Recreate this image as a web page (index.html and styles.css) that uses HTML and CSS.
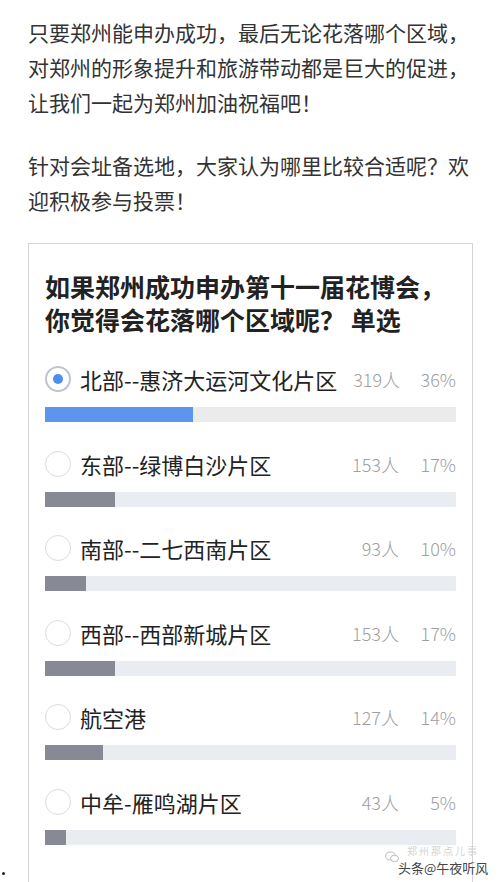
FILE: index.html
```html
<!DOCTYPE html>
<html lang="zh-CN">
<head>
<meta charset="utf-8">
<title>投票</title>
<link rel="stylesheet" href="styles.css">
</head>
<body>
<div class="page">
  <p class="para">只要郑州能申办成功，最后无论花落哪个区域，对郑州的形象提升和旅游带动都是巨大的促进，让我们一起为郑州加油祝福吧！</p>
  <p class="para para-2">针对会址备选地，大家认为哪里比较合适呢？欢迎积极参与投票！</p>

  <div class="vote-row">
    <div class="marker"><span class="dot"></span></div>
    <div class="card">
      <h2 class="title">如果郑州成功申办第十一届花博会，<br>你觉得会花落哪个区域呢？ 单选</h2>
      <ul class="options">
        <li class="option">
          <div class="opt-line">
            <span class="radio radio-on"></span>
            <span class="label">北部--惠济大运河文化片区</span>
            <span class="count">319人</span>
            <span class="pct">36%</span>
          </div>
          <div class="track track-on"><div class="fill fill-on" style="width:36%"></div></div>
        </li>
        <li class="option">
          <div class="opt-line">
            <span class="radio"></span>
            <span class="label">东部--绿博白沙片区</span>
            <span class="count">153人</span>
            <span class="pct">17%</span>
          </div>
          <div class="track"><div class="fill" style="width:17%"></div></div>
        </li>
        <li class="option">
          <div class="opt-line">
            <span class="radio"></span>
            <span class="label">南部--二七西南片区</span>
            <span class="count">93人</span>
            <span class="pct">10%</span>
          </div>
          <div class="track"><div class="fill" style="width:10%"></div></div>
        </li>
        <li class="option">
          <div class="opt-line">
            <span class="radio"></span>
            <span class="label">西部--西部新城片区</span>
            <span class="count">153人</span>
            <span class="pct">17%</span>
          </div>
          <div class="track"><div class="fill" style="width:17%"></div></div>
        </li>
        <li class="option">
          <div class="opt-line">
            <span class="radio"></span>
            <span class="label">航空港</span>
            <span class="count">127人</span>
            <span class="pct">14%</span>
          </div>
          <div class="track"><div class="fill" style="width:14%"></div></div>
        </li>
        <li class="option">
          <div class="opt-line">
            <span class="radio"></span>
            <span class="label">中牟-雁鸣湖片区</span>
            <span class="count">43人</span>
            <span class="pct">5%</span>
          </div>
          <div class="track"><div class="fill" style="width:5%"></div></div>
        </li>
      </ul>
      <div class="watermark">
        <span class="wm-faint">郑州那点儿事</span>
        <svg class="wm-icon" width="14" height="12" viewBox="0 0 14 12"><ellipse cx="5.5" cy="5" rx="5" ry="4" fill="none" stroke="#bbb" stroke-width="1"/><ellipse cx="9.5" cy="7.5" rx="4" ry="3.2" fill="#fff" stroke="#bbb" stroke-width="1"/></svg>
        <span class="wm-text">头条@午夜听风</span>
      </div>
    </div>
  </div>
</div>
</body>
</html>
```

FILE: styles.css
```css
html, body {
  margin: 0;
  padding: 0;
  background: #fff;
}
body {
  width: 500px;
  height: 882px;
  overflow: hidden;
  font-family: "Noto Sans CJK SC", "Noto Sans", sans-serif;
}
.page {
  padding-top: 15px;
}
.para {
  margin: 0 0 0 28px;
  width: 450px;
  font-size: 21px;
  line-height: 35px;
  color: #333;
}
.para-2 {
  margin-top: 28px;
}
.vote-row {
  display: flex;
  align-items: flex-end;
  margin-top: 25px;
}
.marker {
  width: 28px;
  display: flex;
  padding-bottom: 24px;
}
.dot {
  width: 3px;
  height: 3px;
  border-radius: 50%;
  background: #222;
  margin-left: 2px;
}
.card {
  position: relative;
  width: 411px;
  border: 1px solid #d4d4d4;
  padding: 26px 16px 53px;
}
.title {
  margin: 0;
  font-size: 25px;
  line-height: 33px;
  font-weight: 700;
  color: #222;
}
.options {
  list-style: none;
  margin: 28px 0 0;
  padding: 0;
  display: flex;
  flex-direction: column;
  gap: 26.6px;
}
.opt-line {
  display: flex;
  align-items: center;
  height: 30px;
}
.radio {
  box-sizing: border-box;
  width: 26px;
  height: 26px;
  border-radius: 50%;
  border: 1.5px solid #dcdcdc;
  display: flex;
  align-items: center;
  justify-content: center;
  flex: none;
}
.radio-on {
  border: 2px solid #bcc4d2;
}
.radio-on::after {
  content: "";
  width: 10px;
  height: 10px;
  border-radius: 50%;
  background: #4d8df0;
}
.label {
  margin-left: 9px;
  flex: 1;
  font-size: 22px;
  color: #222;
  white-space: nowrap;
}
.count, .pct {
  font-size: 18px;
  color: #a0a0a0;
  text-align: right;
  font-weight: 300;
  white-space: nowrap;
}
.count {
  width: 64px;
}
.pct {
  width: 57px;
}
.track {
  margin-top: 13px;
  height: 15px;
  background: #e9ecf0;
}
.track-on {
  background: #ebebeb;
}
.fill {
  height: 100%;
  background: #878a94;
}
.fill-on {
  background: #5b95ee;
}
.watermark {
  position: absolute;
  left: 356px;
  top: 601px;
  width: 110px;
  height: 34px;
  white-space: nowrap;
}
.wm-faint {
  position: absolute;
  left: 22px;
  top: 0;
  font-size: 10px;
  line-height: 12px;
  color: #d4d4d4;
  letter-spacing: 2px;
}
.wm-icon {
  position: absolute;
  left: 0;
  top: 6px;
}
.wm-text {
  position: absolute;
  left: 13px;
  top: 15px;
  font-size: 13px;
  line-height: 16px;
  color: #444;
  text-shadow: 0 0 2px #fff, 0 0 2px #fff;
}
```
